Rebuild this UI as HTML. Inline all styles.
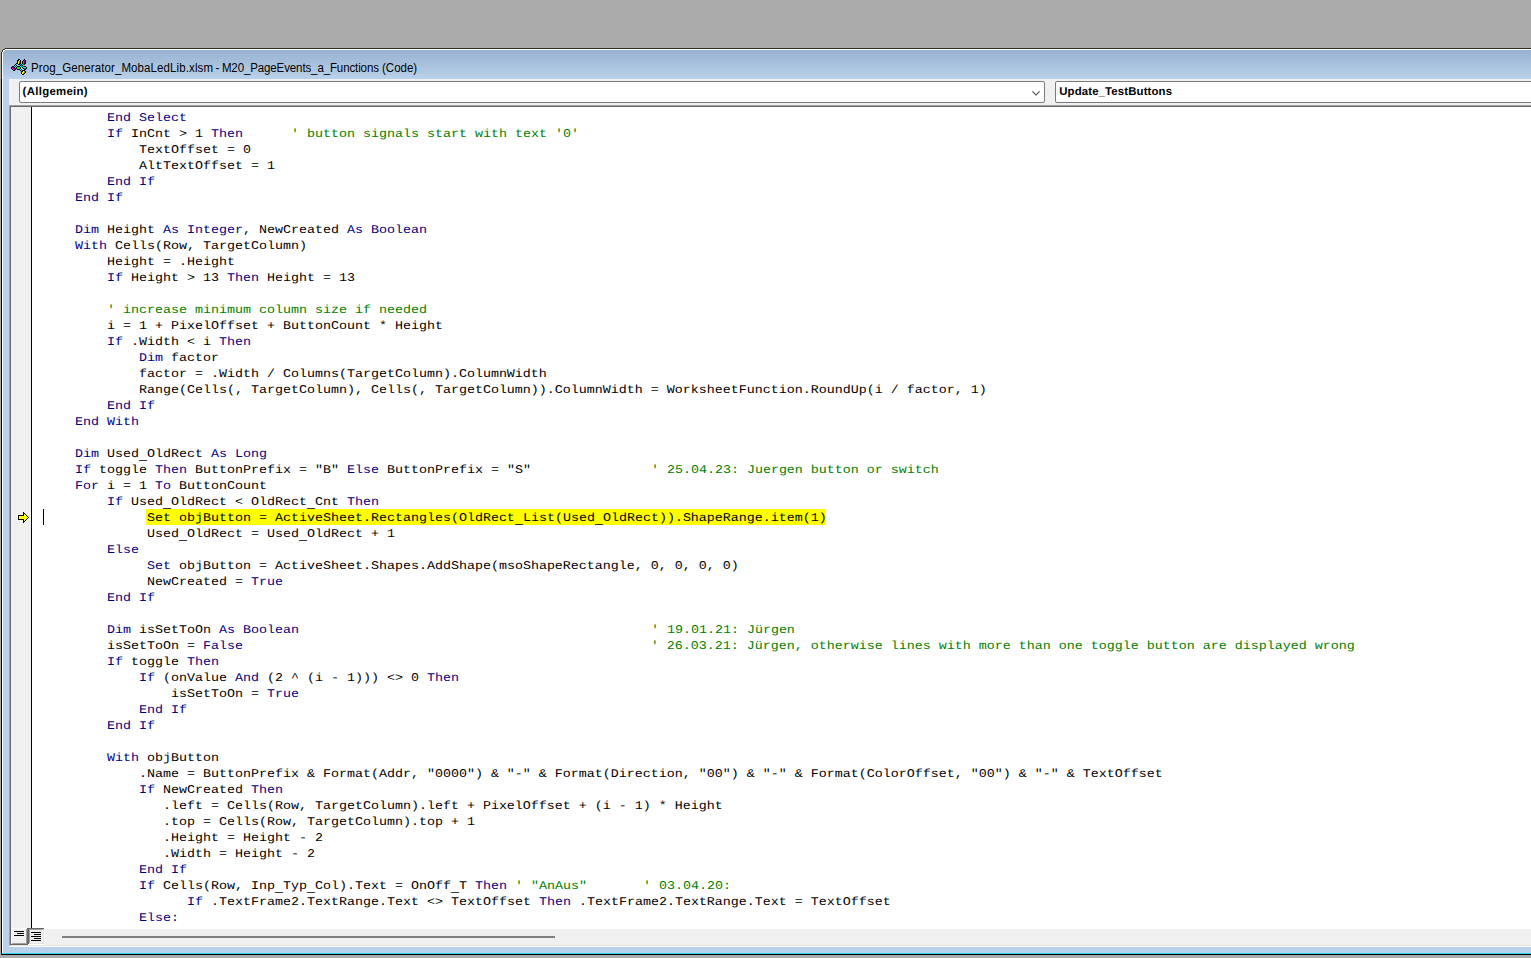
<!DOCTYPE html>
<html lang="de">
<head>
<meta charset="utf-8">
<title>Prog_Generator_MobaLedLib.xlsm - M20_PageEvents_a_Functions (Code)</title>
<style>
*{box-sizing:border-box;margin:0;padding:0}
html,body{width:1531px;height:958px;overflow:hidden;background:#ababab}
body{position:relative;font-family:"Liberation Sans",sans-serif}
.abs{position:absolute}
/* window frame */
.capf{position:absolute;left:1px;top:48px;width:1540px;height:31px;background:#fff;border-left:1px solid #2d2d2d;border-top:1px solid #2d2d2d}
.bodyf{position:absolute;left:1px;top:79px;width:1540px;height:876px;background:#b9d1ea;border-left:1px solid #000;border-bottom:1px solid #000;box-shadow:inset 0 -1px 0 #33d6ee,inset 1px 0 0 #fff}
.cap{position:absolute;left:3px;top:50px;width:1528px;height:29px;background:linear-gradient(#97b2d0,#b9d1ea)}
.title{position:absolute;left:31px;top:60px;height:16px;line-height:16px;font-size:12.5px;color:#000;white-space:nowrap;transform:scaleX(0.9205);transform-origin:0 0}
.tb{position:absolute;left:9px;top:79px;width:1522px;height:26px;background:#f0f0f0}
.combo{position:absolute;top:81px;height:22px;background:#fff;border:1px solid #7a7a7a;border-radius:2px;font-weight:bold;font-size:11.4px;line-height:20px;text-rendering:geometricPrecision;color:#000;white-space:nowrap;padding-left:2.6px}
/* code pane */
.pane{position:absolute;left:11px;top:107px;width:1520px;height:838px;background:#fff}
.e{position:absolute}
.margin{position:absolute;left:11px;top:107px;width:20px;height:821px;background:#f0f0f0}
.mline{position:absolute;left:31px;top:107px;width:1px;height:821px;background:#000}
.code{position:absolute;left:43px;top:109px;width:1300px;height:819px;font-family:"Liberation Mono",monospace;font-size:11.8px;text-rendering:geometricPrecision;color:#000;transform:scaleX(1.12975);transform-origin:0 0}
.ln{position:absolute;left:0;height:16px;line-height:18px;white-space:pre}
.k{color:#000080}
.c{color:#008000}
.h{background:#ffff00;color:#000;display:inline-block;box-sizing:border-box;width:601.9px;height:16px;vertical-align:top;margin-left:-0.885px;padding-left:0.885px}
.u{display:inline-block;transform:translateY(-2.5px) scaleY(1.4);transform-origin:50% 0}
.caret{position:absolute;left:43px;top:509px;width:1px;height:16px;background:#000}
.sb{position:absolute;left:45px;top:929px;width:1486px;height:16px;background:#f0f0f0}
.thumb{position:absolute;left:62px;top:936px;width:493px;height:2px;background:#808080}
</style>
</head>
<body>
<div class="capf"></div>
<div class="bodyf"></div>
<div class="cap"></div>
<svg class="abs" style="left:11px;top:59px" width="16" height="16" viewBox="0 0 16 16" shape-rendering="crispEdges">
<rect x="7" y="0" width="2" height="1" fill="#000"/>
<rect x="13" y="0" width="1" height="1" fill="#000"/>
<rect x="6" y="1" width="2" height="1" fill="#000"/>
<rect x="8" y="1" width="1" height="1" fill="#ffff00"/>
<rect x="9" y="1" width="1" height="1" fill="#000"/>
<rect x="12" y="1" width="1" height="1" fill="#000"/>
<rect x="13" y="1" width="1" height="1" fill="#800080"/>
<rect x="14" y="1" width="1" height="1" fill="#000"/>
<rect x="6" y="2" width="1" height="1" fill="#000"/>
<rect x="7" y="2" width="1" height="1" fill="#ffff00"/>
<rect x="8" y="2" width="1" height="1" fill="#808000"/>
<rect x="9" y="2" width="1" height="1" fill="#000"/>
<rect x="11" y="2" width="1" height="1" fill="#000"/>
<rect x="12" y="2" width="1" height="1" fill="#ff00ff"/>
<rect x="13" y="2" width="1" height="1" fill="#800080"/>
<rect x="14" y="2" width="1" height="1" fill="#000"/>
<rect x="6" y="3" width="1" height="1" fill="#000"/>
<rect x="7" y="3" width="1" height="1" fill="#ffff00"/>
<rect x="8" y="3" width="1" height="1" fill="#808000"/>
<rect x="9" y="3" width="1" height="1" fill="#000"/>
<rect x="11" y="3" width="1" height="1" fill="#000"/>
<rect x="12" y="3" width="1" height="1" fill="#ff00ff"/>
<rect x="13" y="3" width="1" height="1" fill="#800080"/>
<rect x="14" y="3" width="1" height="1" fill="#000"/>
<rect x="5" y="4" width="2" height="1" fill="#000"/>
<rect x="7" y="4" width="1" height="1" fill="#ffff00"/>
<rect x="8" y="4" width="2" height="1" fill="#000"/>
<rect x="11" y="4" width="1" height="1" fill="#000"/>
<rect x="12" y="4" width="1" height="1" fill="#ff00ff"/>
<rect x="13" y="4" width="2" height="1" fill="#000"/>
<rect x="4" y="5" width="1" height="1" fill="#000"/>
<rect x="5" y="5" width="1" height="1" fill="#00ffff"/>
<rect x="7" y="5" width="2" height="1" fill="#000"/>
<rect x="9" y="5" width="1" height="1" fill="#008080"/>
<rect x="10" y="5" width="1" height="1" fill="#000"/>
<rect x="11" y="5" width="1" height="1" fill="#00ffff"/>
<rect x="12" y="5" width="2" height="1" fill="#000"/>
<rect x="3" y="6" width="1" height="1" fill="#000"/>
<rect x="4" y="6" width="1" height="1" fill="#00ffff"/>
<rect x="5" y="6" width="1" height="1" fill="#000"/>
<rect x="9" y="6" width="1" height="1" fill="#000"/>
<rect x="10" y="6" width="1" height="1" fill="#008080"/>
<rect x="11" y="6" width="1" height="1" fill="#000"/>
<rect x="1" y="7" width="2" height="1" fill="#000"/>
<rect x="3" y="7" width="1" height="1" fill="#00ffff"/>
<rect x="4" y="7" width="1" height="1" fill="#000"/>
<rect x="6" y="7" width="3" height="1" fill="#000"/>
<rect x="9" y="7" width="1" height="1" fill="#00ffff"/>
<rect x="10" y="7" width="1" height="1" fill="#000"/>
<rect x="11" y="7" width="1" height="1" fill="#00ffff"/>
<rect x="12" y="7" width="3" height="1" fill="#000"/>
<rect x="0" y="8" width="1" height="1" fill="#000"/>
<rect x="1" y="8" width="2" height="1" fill="#800080"/>
<rect x="3" y="8" width="1" height="1" fill="#000"/>
<rect x="5" y="8" width="1" height="1" fill="#000"/>
<rect x="6" y="8" width="3" height="1" fill="#00ff00"/>
<rect x="9" y="8" width="1" height="1" fill="#000"/>
<rect x="11" y="8" width="1" height="1" fill="#000"/>
<rect x="12" y="8" width="3" height="1" fill="#00ffff"/>
<rect x="15" y="8" width="1" height="1" fill="#000"/>
<rect x="0" y="9" width="1" height="1" fill="#000"/>
<rect x="1" y="9" width="1" height="1" fill="#ff00ff"/>
<rect x="2" y="9" width="2" height="1" fill="#800080"/>
<rect x="4" y="9" width="2" height="1" fill="#000"/>
<rect x="6" y="9" width="3" height="1" fill="#00ff00"/>
<rect x="9" y="9" width="1" height="1" fill="#000"/>
<rect x="12" y="9" width="1" height="1" fill="#000"/>
<rect x="13" y="9" width="2" height="1" fill="#008080"/>
<rect x="15" y="9" width="1" height="1" fill="#000"/>
<rect x="1" y="10" width="1" height="1" fill="#000"/>
<rect x="2" y="10" width="1" height="1" fill="#ff00ff"/>
<rect x="3" y="10" width="1" height="1" fill="#800080"/>
<rect x="4" y="10" width="1" height="1" fill="#000"/>
<rect x="6" y="10" width="3" height="1" fill="#000"/>
<rect x="9" y="10" width="1" height="1" fill="#00ffff"/>
<rect x="10" y="10" width="1" height="1" fill="#000"/>
<rect x="13" y="10" width="2" height="1" fill="#000"/>
<rect x="2" y="11" width="2" height="1" fill="#000"/>
<rect x="9" y="11" width="1" height="1" fill="#000"/>
<rect x="10" y="11" width="1" height="1" fill="#00ffff"/>
<rect x="11" y="11" width="3" height="1" fill="#000"/>
<rect x="10" y="12" width="1" height="1" fill="#000"/>
<rect x="11" y="12" width="1" height="1" fill="#000"/>
<rect x="12" y="12" width="1" height="1" fill="#ffff00"/>
<rect x="13" y="12" width="1" height="1" fill="#808000"/>
<rect x="14" y="12" width="1" height="1" fill="#000"/>
<rect x="10" y="13" width="1" height="1" fill="#000"/>
<rect x="11" y="13" width="2" height="1" fill="#ffff00"/>
<rect x="13" y="13" width="1" height="1" fill="#808000"/>
<rect x="14" y="13" width="1" height="1" fill="#000"/>
<rect x="10" y="14" width="1" height="1" fill="#000"/>
<rect x="11" y="14" width="1" height="1" fill="#ffff00"/>
<rect x="12" y="14" width="1" height="1" fill="#808000"/>
<rect x="13" y="14" width="1" height="1" fill="#000"/>
<rect x="11" y="15" width="2" height="1" fill="#000"/>
</svg>
<svg class="abs" style="left:0;top:48px" width="6" height="4" viewBox="0 0 6 4" shape-rendering="crispEdges">
<rect x="0" y="0" width="6" height="4" fill="#ababab"/>
<rect x="5" y="0" width="1" height="1" fill="#2d2d2d"/>
<rect x="3" y="1" width="2" height="1" fill="#2d2d2d"/><rect x="5" y="1" width="1" height="1" fill="#fff"/>
<rect x="2" y="2" width="1" height="2" fill="#2d2d2d"/><rect x="3" y="2" width="2" height="1" fill="#fff"/><rect x="5" y="2" width="1" height="1" fill="#97b2d0"/>
<rect x="3" y="3" width="1" height="1" fill="#fff"/><rect x="4" y="3" width="2" height="1" fill="#98b3d1"/>
</svg>
<div class="title"><span style="letter-spacing:0.11px">Prog_Generator_MobaLedLib.xlsm</span><span style="word-spacing:-0.8px"> - </span><span style="letter-spacing:-0.125px">M20_PageEvents_a_Functions</span> (Code)</div>
<div class="tb"></div>
<div class="combo" style="left:19px;width:1026px;letter-spacing:0.3px">(Allgemein)
<svg class="abs" style="left:1012px;top:9px" width="8" height="5" viewBox="0 0 8 5"><path d="M0.4 0.4 L4 4 L7.6 0.4" fill="none" stroke="#555" stroke-width="1.15"/></svg>
</div>
<div class="combo" style="left:1055px;width:500px;letter-spacing:0.135px;padding-left:3.2px">Update_TestButtons</div>
<div class="pane"></div>
<div class="e" style="left:9px;top:105px;width:1522px;height:1px;background:#a0a0a0"></div>
<div class="e" style="left:9px;top:105px;width:1px;height:841px;background:#a0a0a0"></div>
<div class="e" style="left:10px;top:106px;width:1521px;height:1px;background:#696969"></div>
<div class="e" style="left:10px;top:106px;width:1px;height:839px;background:#696969"></div>
<div class="e" style="left:10px;top:945px;width:1521px;height:1px;background:#e3e3e3"></div>
<div class="e" style="left:9px;top:946px;width:1522px;height:1px;background:#fff"></div>
<div class="margin"></div>
<div class="mline"></div>
<svg class="abs" style="left:18px;top:512px" width="11" height="11" viewBox="0 0 11 11" shape-rendering="crispEdges">
<polygon points="0,3 5,3 5,0 6,0 11,5.5 6,11 5,11 5,8 0,8" fill="#000"/>
<polygon points="1,4 6,4 6,2 9.5,5.5 6,9 6,7 1,7" fill="#ffff00"/>
</svg>
<div class="caret"></div>
<div class="code">
<div class="ln" style="top:0px">        <span class="k">End</span> <span class="k">Select</span></div>
<div class="ln" style="top:16px">        <span class="k">If</span> InCnt &gt; 1 <span class="k">Then</span>      <span class="c">' button signals start with text '0'</span></div>
<div class="ln" style="top:32px">            TextOffset = 0</div>
<div class="ln" style="top:48px">            AltTextOffset = 1</div>
<div class="ln" style="top:64px">        <span class="k">End</span> <span class="k">If</span></div>
<div class="ln" style="top:80px">    <span class="k">End</span> <span class="k">If</span></div>
<div class="ln" style="top:112px">    <span class="k">Dim</span> Height <span class="k">As</span> <span class="k">Integer</span>, NewCreated <span class="k">As</span> <span class="k">Boolean</span></div>
<div class="ln" style="top:128px">    <span class="k">With</span> Cells(Row, TargetColumn)</div>
<div class="ln" style="top:144px">        Height = .Height</div>
<div class="ln" style="top:160px">        <span class="k">If</span> Height &gt; 13 <span class="k">Then</span> Height = 13</div>
<div class="ln" style="top:192px">        <span class="c">' increase minimum column size if needed</span></div>
<div class="ln" style="top:208px">        i = 1 + PixelOffset + ButtonCount * Height</div>
<div class="ln" style="top:224px">        <span class="k">If</span> .Width &lt; i <span class="k">Then</span></div>
<div class="ln" style="top:240px">            <span class="k">Dim</span> factor</div>
<div class="ln" style="top:256px">            factor = .Width / Columns(TargetColumn).ColumnWidth</div>
<div class="ln" style="top:272px">            Range(Cells(, TargetColumn), Cells(, TargetColumn)).ColumnWidth = WorksheetFunction.RoundUp(i / factor, 1)</div>
<div class="ln" style="top:288px">        <span class="k">End</span> <span class="k">If</span></div>
<div class="ln" style="top:304px">    <span class="k">End</span> <span class="k">With</span></div>
<div class="ln" style="top:336px">    <span class="k">Dim</span> Used<span class="u">_</span>OldRect <span class="k">As</span> <span class="k">Long</span></div>
<div class="ln" style="top:352px">    <span class="k">If</span> toggle <span class="k">Then</span> ButtonPrefix = "B" <span class="k">Else</span> ButtonPrefix = "S"               <span class="c">' 25.04.23: Juergen button or switch</span></div>
<div class="ln" style="top:368px">    <span class="k">For</span> i = 1 <span class="k">To</span> ButtonCount</div>
<div class="ln" style="top:384px">        <span class="k">If</span> Used<span class="u">_</span>OldRect &lt; OldRect<span class="u">_</span>Cnt <span class="k">Then</span></div>
<div class="ln" style="top:400px">             <span class="h">Set objButton = ActiveSheet.Rectangles(OldRect<span class="u">_</span>List(Used<span class="u">_</span>OldRect)).ShapeRange.item(1)</span></div>
<div class="ln" style="top:416px">             Used<span class="u">_</span>OldRect = Used<span class="u">_</span>OldRect + 1</div>
<div class="ln" style="top:432px">        <span class="k">Else</span></div>
<div class="ln" style="top:448px">             <span class="k">Set</span> objButton = ActiveSheet.Shapes.AddShape(msoShapeRectangle, 0, 0, 0, 0)</div>
<div class="ln" style="top:464px">             NewCreated = <span class="k">True</span></div>
<div class="ln" style="top:480px">        <span class="k">End</span> <span class="k">If</span></div>
<div class="ln" style="top:512px">        <span class="k">Dim</span> isSetToOn <span class="k">As</span> <span class="k">Boolean</span>                                            <span class="c">' 19.01.21: Jürgen</span></div>
<div class="ln" style="top:528px">        isSetToOn = <span class="k">False</span>                                                   <span class="c">' 26.03.21: Jürgen, otherwise lines with more than one toggle button are displayed wrong</span></div>
<div class="ln" style="top:544px">        <span class="k">If</span> toggle <span class="k">Then</span></div>
<div class="ln" style="top:560px">            <span class="k">If</span> (onValue <span class="k">And</span> (2 ^ (i - 1))) &lt;&gt; 0 <span class="k">Then</span></div>
<div class="ln" style="top:576px">                isSetToOn = <span class="k">True</span></div>
<div class="ln" style="top:592px">            <span class="k">End</span> <span class="k">If</span></div>
<div class="ln" style="top:608px">        <span class="k">End</span> <span class="k">If</span></div>
<div class="ln" style="top:640px">        <span class="k">With</span> objButton</div>
<div class="ln" style="top:656px">            .Name = ButtonPrefix &amp; Format(Addr, "0000") &amp; "-" &amp; Format(Direction, "00") &amp; "-" &amp; Format(ColorOffset, "00") &amp; "-" &amp; TextOffset</div>
<div class="ln" style="top:672px">            <span class="k">If</span> NewCreated <span class="k">Then</span></div>
<div class="ln" style="top:688px">               .left = Cells(Row, TargetColumn).left + PixelOffset + (i - 1) * Height</div>
<div class="ln" style="top:704px">               .top = Cells(Row, TargetColumn).top + 1</div>
<div class="ln" style="top:720px">               .Height = Height - 2</div>
<div class="ln" style="top:736px">               .Width = Height - 2</div>
<div class="ln" style="top:752px">            <span class="k">End</span> <span class="k">If</span></div>
<div class="ln" style="top:768px">            <span class="k">If</span> Cells(Row, Inp<span class="u">_</span>Typ<span class="u">_</span>Col).Text = OnOff<span class="u">_</span>T <span class="k">Then</span> <span class="c">' "AnAus"       ' 03.04.20:</span></div>
<div class="ln" style="top:784px">                  <span class="k">If</span> .TextFrame2.TextRange.Text &lt;&gt; TextOffset <span class="k">Then</span> .TextFrame2.TextRange.Text = TextOffset</div>
<div class="ln" style="top:800px">            <span class="k">Else:</span></div>
</div>
<div class="sb"></div>
<div class="thumb"></div>
<svg class="abs" style="left:11px;top:928px" width="34" height="17" viewBox="0 0 34 17" shape-rendering="crispEdges">
<rect x="0" y="0" width="34" height="17" fill="#f0f0f0"/>
<rect x="0" y="0" width="16" height="1" fill="#fff"/><rect x="0" y="0" width="1" height="16" fill="#fff"/>
<rect x="1" y="15" width="15" height="1" fill="#a0a0a0"/><rect x="15" y="1" width="1" height="15" fill="#a0a0a0"/>
<rect x="0" y="16" width="17" height="1" fill="#696969"/><rect x="16" y="0" width="1" height="17" fill="#696969"/>
<rect x="17" y="0" width="16" height="1" fill="#696969"/><rect x="17" y="0" width="1" height="16" fill="#696969"/>
<rect x="18" y="1" width="14" height="1" fill="#a0a0a0"/><rect x="18" y="1" width="1" height="14" fill="#a0a0a0"/>
<rect x="18" y="15" width="15" height="1" fill="#e3e3e3"/><rect x="32" y="1" width="1" height="15" fill="#e3e3e3"/>
<rect x="17" y="16" width="17" height="1" fill="#fff"/><rect x="33" y="0" width="1" height="17" fill="#fff"/>
<path d="M3 3.5h10M6 5.5h7M3 7.5h10M20 4.5h10M23 6.5h7M20 8.5h10M23 10.5h7M20 12.5h10" stroke="#000" stroke-width="1" fill="none"/>
</svg>

</body>
</html>
